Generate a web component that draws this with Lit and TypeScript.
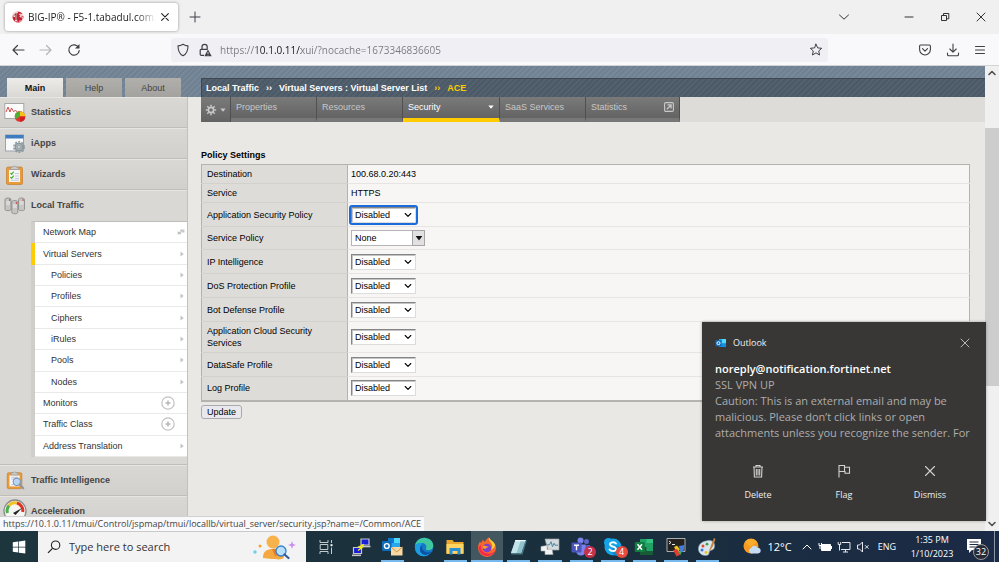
import { LitElement, html, css, svg, nothing } from "lit";
import type { TemplateResult } from "lit";
import { customElement, property } from "lit/decorators.js";
import { classMap } from "lit/directives/class-map.js";

type Icon = TemplateResult;

const draw = (size: number, box: string, body: unknown): Icon =>
  html`<svg width=${size} height=${size} viewBox=${box} aria-hidden="true" fill="none">${body}</svg>`;

const line = (size: number, box: string, d: string, width = 1): Icon =>
  draw(size, box, svg`<path d=${d} stroke="currentColor" stroke-width=${width} stroke-linecap="round" stroke-linejoin="round"/>`);

const icons = {
  back: line(14, "0 0 14 14", "M13 7H2M6.500 2.500L2 7l4.500 4.500", 1.2),
  forward: line(14, "0 0 14 14", "M1 7h11M7.500 2.500L12 7l-4.500 4.500", 1.2),
  reload: draw(14, "0 0 14 14", svg`<path d="M11.600 4.500A5.200 5.200 0 1 0 12.200 7.600" stroke="currentColor" stroke-width="1.200" stroke-linecap="round"/><path d="M12.500 1v4.600H8z" fill="currentColor"/>`),
  shield: line(14, "0 0 14 14", "M7 1.200c1.600 1 3.400 1.600 5 1.700 0 4.700-1.500 8-5 9.900C3.500 10.900 2 7.600 2 2.900c1.600-.1 3.400-.7 5-1.700z", 1.1),
  lock: draw(14, "0 0 14 14", svg`<path d="M4 6.300V4a2.600 2.600 0 0 1 5.200 0v2.300M6 12.300H3.200a1 1 0 0 1-1-1v-4a1 1 0 0 1 1-1h6.500" stroke="currentColor" stroke-width="1.200"/><path d="M10 6.500l3.700 6.700H6.300z" fill="currentColor"/><path d="M10 9v2M10 11.800v.7" stroke="#f0f0f4" stroke-width=".8"/>`),
  star: line(14, "0 0 14 14", "M7 1.200l1.700 3.700 4 .4-3 2.700.9 4L7 9.900 3.400 12l.9-4-3-2.700 4-.4z", 1),
  pocket: line(14, "0 0 14 14", "M2.600 2h8.800c.6 0 1 .4 1 1v3.600a5.400 5.400 0 0 1-10.800 0V3c0-.6.400-1 1-1zM4.500 5.700L7 8.100l2.500-2.400", 1.1),
  download: line(14, "0 0 14 14", "M7 1v8M3.800 6L7 9.200 10.200 6M1.500 10v1.500c0 .8.500 1.300 1.300 1.300h8.400c.8 0 1.300-.5 1.300-1.300V10", 1.1),
  menu: line(12, "0 0 12 12", "M1.500 2.500h9M1.500 6h9M1.500 9.500h9", 1),
  chevron: line(12, "0 0 12 12", "M1.500 4L6 8.200 10.500 4", 1),
  minimise: line(12, "0 0 12 12", "M2 6h8", 1),
  restore: draw(12, "0 0 12 12", svg`<path d="M2.500 4.500h5v5h-5zM4.500 4.200V2.500h5.300v5.300H7.800" stroke="currentColor"/>`),
  cross: line(12, "0 0 12 12", "M2 2l8 8M10 2l-8 8", 1),
  plus: line(12, "0 0 12 12", "M6 1v10M1 6h10", 1),
  f5: draw(12, "0 0 12 12", svg`<circle cx="6" cy="6" r="5.500" fill="#c8202f"/><path d="M1 3.800A5.500 5.500 0 0 1 6.500.5L5 3v6.500l1.500.8-4 .2L3.200 9 3 6H1.500z" fill="#f4dcdc"/><path d="M7 3.300h4l.4 1.400H8.200l-.2 1c2.300 0 3.200 1 2.800 2.500-.4 1.300-1.800 2.200-3.600 1.900" stroke="#fff" stroke-width=".9"/><path d="M2.200 4.500L4 2.500v6.500" stroke="#7e1018" stroke-width="1"/>`),
  gear: draw(12, "0 0 12 12", svg`<circle cx="6" cy="6" r="2.600" stroke="currentColor" stroke-width="1.600"/><path d="M6 .8v2M6 9.200v2M.8 6h2M9.200 6h2M2.300 2.300l1.400 1.400M8.300 8.300l1.400 1.400M9.700 2.300L8.300 3.700M3.700 8.300L2.300 9.700" stroke="currentColor" stroke-width="1.500"/>`),
  caret: draw(6, "0 0 6 6", svg`<path d="M.3 1.500h5.400L3 4.700z" fill="currentColor"/>`),
  popout: draw(10, "0 0 10 10", svg`<rect x=".6" y=".6" width="8.800" height="8.800" rx="1.200" stroke="currentColor" stroke-width="1.100"/><path d="M2.800 7.200L6.300 3.700M3.500 2.900h3.600v3.600" stroke="currentColor" stroke-width="1.300"/>`),
  arrow: draw(6, "0 0 6 6", svg`<path d="M1.500.5L4.700 3 1.500 5.500z" fill="#c3c3c3"/>`),
  windows: draw(8, "0 0 8 8", svg`<path d="M3 1.500h4.500v3H3z" fill="#c9c9c9"/><path d="M.5 3.500H4v3H.5z" fill="#bdbdbd" stroke="#fff" stroke-width=".5"/>`),
  add: draw(14, "0 0 14 14", svg`<circle cx="7" cy="7" r="6.200" stroke="#c2c2c2" stroke-width="1.200"/><path d="M7 4.500v5M4.500 7h5" stroke="#b8b8b8" stroke-width="1.500"/>`),
  pick: line(8, "0 0 8 8", "M1.200 2.500L4 5.300 6.800 2.500", 1.1),
  up: line(10, "0 0 10 10", "M2 6.500l3-3 3 3", 1.6),
  down: line(10, "0 0 10 10", "M2 3.500l3 3 3-3", 1.6),
  bin: draw(16, "0 0 16 16", svg`<path d="M3 4h10M6 4V2.500h4V4M4 4l.4 10h7.200L12 4" stroke="currentColor" stroke-width="1.100"/><path d="M6.300 6v6.500M8 6v6.500M9.700 6v6.500" stroke="currentColor" stroke-width="1.100"/>`),
  flag: draw(16, "0 0 16 16", svg`<path d="M3 14.500V2.500h5.500v1.800h5v6H9V8.500H3M8.500 4.300v4" stroke="currentColor" stroke-width="1.100"/>`),
  dismiss: line(16, "0 0 16 16", "M3.500 3.500l9 9M12.500 3.500l-9 9", 1.1),
  outlookSmall: draw(12, "0 0 12 12", svg`<path d="M4 2h7v8H4z" fill="#28a8ea"/><path d="M7 2h4v4H7z" fill="#50d9ff"/><path d="M4 6.500h7V10H4z" fill="#1490df"/><rect x=".5" y="3.200" width="6" height="6" fill="#0f6cbd"/><circle cx="3.500" cy="6.200" r="1.500" stroke="#fff"/>`),
};

const glass = svg`<circle cx="13" cy="14" r="4" fill="#b9d6f5" stroke="#7d97b3" stroke-width="1.200"/><path d="M16 17l4 4" stroke="#8f959b" stroke-width="2.200" stroke-linecap="round"/>`;
const clip = svg`<rect x="2.500" y="4" width="16" height="17.500" rx="1.500" fill="#eb9a35" stroke="#bd7722" stroke-width=".6"/><path d="M5 7h11v12H5z" fill="#f4f6fb"/><path d="M6.500 6.500V4.500L9 4a1.700 1.700 0 0 1 3 0l2.500.5v2z" fill="#c7c9cc" stroke="#8e9195" stroke-width=".6"/>`;

const modules = {
  statistics: draw(22, "0 0 22 22", svg`<rect x=".8" y="2.500" width="19" height="15" fill="#fbfbfb" stroke="#a7a7a7"/><path d="M2 11l2-5 2 5 1.500-4 2 3.500 2-1 2 1.500H18" stroke="#d23b3b" stroke-width=".9"/><circle cx="16" cy="15.500" r="5.300" fill="#e2382f"/><path d="M16 15.500v-5.300a5.300 5.300 0 0 1 5.300 5.300z" fill="#f5c21b"/><path d="M16 15.500l5.300 0a5.300 5.300 0 0 1-5.300 5.300z" fill="#d41f22"/><path d="M16 10.200a5.300 5.300 0 0 0-4.600 8L16 15.500z" fill="#52ae32"/>`),
  iapps: draw(22, "0 0 22 22", svg`<rect x="1.500" y="3" width="18" height="16" fill="#f8f9fb" stroke="#9aa3ad"/><path d="M1.500 3h18v3.500h-18z" fill="#3d7cc0"/><circle cx="15" cy="15" r="4" fill="#a4afb3" stroke="#828f94"/><circle cx="15" cy="15" r="5.200" stroke="#8b989d" stroke-width="1.400" stroke-dasharray="2 1.300"/><circle cx="15" cy="15" r="1.400" fill="#e9edee" stroke="#78858a" stroke-width=".6"/>`),
  wizards: draw(22, "0 0 22 22", svg`${clip}<path d="M6.500 10l1.200 1.300 2-2.600M6.500 14l1.200 1.300 2-2.600" stroke="#4fb32e" stroke-width="1.300"/><path d="M11 10.500h4M11 13h4M11 15.500h4M7 17.300h8" stroke="#b9bfd0" stroke-width=".8"/>`),
  traffic: draw(22, "0 0 22 22", svg`<g fill="#c5c6c4" stroke="#858683" stroke-width=".8"><path d="M1 5.500c0-2 6-2 6 0v10c0 1.500-6 1.500-6 0zM14.500 5.500c0-2 6-2 6 0v10c0 1.500-6 1.500-6 0zM7.800 8c0-2 6-2 6 0v10.500c0 1.600-6 1.600-6 0z"/></g><path d="M2 8h4M2 10h4M15.500 8h4M15.500 10h4M8.800 11h4M8.800 13h4" stroke="#f0f0ef" stroke-width=".9"/><path d="M5 6h1.200M18.500 6h1.200M11.800 9h1.200" stroke="#d83232" stroke-width="1.400"/>`),
  intelligence: draw(22, "0 0 22 24", svg`${clip}<path d="M7 9h7M7 11h4M7 17h4" stroke="#b9bfd0"/>${glass}`),
  acceleration: draw(24, "0 0 24 24", svg`<circle cx="12" cy="12" r="11" fill="#f5f5f4" stroke="#8b8b89" stroke-width="1.300"/><path d="M4.500 14A8 8 0 0 1 6 6.500" stroke="#49b149" stroke-width="3"/><path d="M6 6.500A8 8 0 0 1 14 4" stroke="#f2c325" stroke-width="3"/><path d="M14 4a8 8 0 0 1 5.700 9" stroke="#dd3327" stroke-width="3"/><path d="M10 14l9-5-6.500 7z" fill="#222"/>`),
};

const apps = {
  start: draw(14, "0 0 14 14", svg`<path d="M.8 2.300l5.400-.8v5.200H.8zM6.900 1.400L13.300.5v6.200H6.900zM.8 7.400h5.400v5.200l-5.400-.8zM6.900 7.400h6.400v6.200l-6.400-.9z" fill="#fff"/>`),
  search: draw(14, "0 0 14 14", svg`<circle cx="8.600" cy="5.200" r="4.200" stroke="#222" stroke-width="1.100"/><path d="M5.500 8.300L1 12.800" stroke="#222" stroke-width="1.200"/>`),
  person: html`<svg width="44" height="26" viewBox="0 0 44 26" aria-hidden="true" fill="none"><path d="M11 24c0-7 4-9 10-9s11 2 11 7-8 3-12 3z" fill="#f5a742"/><path d="M20 15c3-1 9 0 11 5l-8 2z" fill="#e47f2c"/><circle cx="21" cy="8" r="6.500" fill="#f7b24c"/><circle cx="29" cy="17" r="5" fill="#b8e1fb" stroke="#3d7fc1" stroke-width="1.300"/><path d="M32.500 20.500l4 3.500" stroke="#3159a0" stroke-width="2.200" stroke-linecap="round"/><path d="M40 7l1 3 3 1-3 1-1 3-1-3-3-1 3-1z" fill="#c78bf0"/><circle cx="8" cy="12" r="1.500" fill="#f3a32d"/><circle cx="3" cy="18" r="1.700" fill="#6ad1ea"/></svg>`,
  view: draw(16, "0 0 16 16", svg`<path d="M2 1v2.500h8V1M2 15v-2.500h8V15M2.200 5.500h7.600v5H2.200zM13.500 1v3M13.500 8.500V15" stroke="#c3cccf" stroke-width="1"/><path d="M12.500 5.200h2v2h-2z" fill="#fff"/>`),
  putty: draw(20, "0 0 20 20", svg`<path d="M10 2h8v6h-8z" fill="#1520d8" stroke="#c7c7c7" stroke-width="1.200"/><path d="M11 9.500h8.500" stroke="#c7c7c7" stroke-width="1.600"/><path d="M2.500 10.500h8v6h-8z" fill="#1520d8" stroke="#c7c7c7" stroke-width="1.200"/><path d="M1 18.300h9" stroke="#c7c7c7" stroke-width="1.600"/><path d="M13 7.500l-5 2.500 3 .5-4 3" stroke="#f4ea20" stroke-width="1.500"/>`),
  outlook: draw(22, "0 0 22 22", svg`<path d="M7 2h12v13H7z" fill="#28a8ea"/><path d="M13 2h6v5h-6z" fill="#50d9ff"/><path d="M7 2h6v5H7z" fill="#0f7bd0"/><rect x="1" y="5" width="9.500" height="10" rx="1" fill="#0f6cbd"/><circle cx="5.800" cy="10" r="2.400" stroke="#fff" stroke-width="1.400"/><path d="M10 11h11.500v8.500H10z" fill="#f8d9a3"/><path d="M10 11l5.800 5 5.700-5" stroke="#c98c42" stroke-width=".9"/>`),
  edge: draw(20, "0 0 20 20", svg`<circle cx="10" cy="10" r="9.300" fill="#1577c9"/><path d="M1 8.500C2 3.500 6 .7 10.300.7c5 0 9 3.600 9 7.800 0 3-2.300 4.700-5 4.700-1.800 0-2.800-.7-2.300-1.600C13.500 8.500 11 6 8 6 5 6 2 7 1 8.500z" fill="#3fc8a0"/><path d="M1 9c2-3 5.500-3.500 7.500-2.300C5.500 8 5 12 7.500 15c2 2.300 5.500 2.800 8.500 1.500-3 4.200-15.500 4.500-15-7.500z" fill="#1b9de2"/><path d="M8.500 8.500c-1.500 3 .5 6.500 5 7 2 .2 3.500-.5 4.300-1.200-2 3.700-7 4.700-10 2.200-2.500-2.300-2.500-6.500.7-8z" fill="#0c51a0"/>`),
  explorer: draw(20, "0 0 20 20", svg`<path d="M1.500 3h6l1.500 2h9.500v12h-17z" fill="#eaa92e"/><path d="M1.500 7h17v9.500h-17z" fill="#fcd462"/><path d="M4.500 11h11v6.500h-3V14h-5v3.500h-3z" fill="#2a8ed8"/>`),
  firefox: draw(20, "0 0 20 20", svg`<path d="M10 1.800c1-.8 1.500-1 2-1.300.3 1.500 1.500 2.300 3 3.800C18 6.500 19 8.500 19 11a9 9 0 0 1-18 0c0-3 1-5 2-6.500L4 6l2-3.500L7.500 5z" fill="#f9662c"/><path d="M12 .5c-1 3 2 4 3 7 1 3-1 4.500-2 5 3.500 0 5-2.500 5-5C17 4.500 13.500 3.500 12 .5z" fill="#ffcf35"/><path d="M1.500 10c0 5 4 9 8.500 9s7-2.500 8.300-5c-2 2-5.500 3-8.300 2.500C5 15.500 3.500 12 4 8z" fill="#f5294e"/><circle cx="10" cy="11" r="4.300" fill="#7a43c9"/><path d="M5.700 9c2-.8 4 .5 6 .5-1 1.500-3 1-3.500 2.500-1.500 0-2.800-1-2.500-3z" fill="#ff9c28"/>`),
  notepad: draw(20, "0 0 20 20", svg`<path d="M7.500 3h10.500L13.500 16H3z" fill="#8fc3cf"/><path d="M7.500 3h5.500L8.500 16H3z" fill="#c3e2e9"/><path d="M7.500 3h10.500l-.4 1.200H7z" fill="#f3fafb"/><path d="M3 16h10.500L18 3l.7 1-4.200 13.500H3.300z" fill="#4d7884"/>`),
  monitor: draw(20, "0 0 20 20", svg`<path d="M5 2h14v11H8z" fill="#d5dadd" stroke="#9ba2a6" stroke-width=".7"/><path d="M6.500 8l3-.3 1.500-3 1.500 5 1.500-3.500 1 2h3" stroke="#4a87a6"/><path d="M1 9.500l6-1v4l5-.5 1 5.500H5V14H1z" fill="#f1f2f2" stroke="#aeb1b3" stroke-width=".6"/>`),
  teams: draw(20, "0 0 20 20", svg`<circle cx="15.500" cy="4.500" r="2.500" fill="#5e66c7"/><circle cx="9.500" cy="3.500" r="3" fill="#7b83eb"/><path d="M12 8h7v5.500a4 4 0 0 1-4 4z" fill="#5059c9"/><path d="M5 7.500h9.500V14c0 6-9 6-9.500 0z" fill="#7b83eb"/><rect x=".5" y="5.500" width="10" height="10" rx="1" fill="#4b53bc"/><path d="M3 8.200h5M5.500 8.200v5" stroke="#fff" stroke-width="1.400"/>`),
  skype: draw(20, "0 0 20 20", svg`<circle cx="10" cy="10" r="8.500" fill="#14a5e8"/><circle cx="5.500" cy="5.500" r="4.500" fill="#14a5e8"/><circle cx="14" cy="14" r="5" fill="#0d8bd0"/><path d="M13 6.500c-1.500-2-6-1.500-6 .8 0 3 6 1.700 6 4.700 0 2.500-5 2.700-6.500.5" stroke="#fff" stroke-width="1.800" stroke-linecap="round"/>`),
  excel: draw(20, "0 0 20 20", svg`<path d="M6 2h13v16H6z" fill="#21a366"/><path d="M12.500 2H19v4h-6.500z" fill="#33c481"/><path d="M6 10h6.500v8H6zM12.500 14H19v4h-6.500z" fill="#185c37"/><rect x=".8" y="5" width="10" height="10" rx="1" fill="#107c41"/><path d="M3.500 7.300l4.500 5.400M8 7.300l-4.500 5.400" stroke="#fff" stroke-width="1.500"/>`),
  terminal: draw(20, "0 0 20 20", svg`<path d="M1 1.500h18v13H1z" fill="#24211f" stroke="#cfcfcf" stroke-width=".8"/><path d="M3 4l2 1.500L3 7M6 7.500h3" stroke="#fff" stroke-width=".9"/><path d="M8 10l3-1.500 3 4-3 3z" fill="#f0c419"/><path d="M7 13l4-1 3.500 5.500-4 2z" fill="#e03c31"/><path d="M13 9l5.500-1-1 6.500-3.500 1.500z" fill="#3f7ee0"/><path d="M12 15l4-1-1.500 4z" fill="#46a84a"/>`),
  paint: draw(20, "0 0 20 20", svg`<path d="M9 4c6-1.500 9 1 8.500 5.500-.4 4-3 3-4.500 4.500s0 4.500-4.500 4.500C4 18.500 1 15 1.500 11 2 7 5 4.800 9 4z" fill="#d9e6ef" stroke="#8ba3b4" stroke-width=".6"/><circle cx="6" cy="9" r="1.500" fill="#e5462f"/><circle cx="10" cy="7.200" r="1.400" fill="#3f9f46"/><circle cx="5" cy="13" r="1.500" fill="#3f74d8"/><circle cx="9" cy="15.500" r="1.400" fill="#eac024"/><path d="M17 1l1.500 1-2.500 7-5 8 3.500-10z" fill="#c98439"/>`),
  weather: draw(18, "0 0 18 18", svg`<circle cx="8" cy="8" r="7.500" fill="#f79a22"/><path d="M2 4a7.500 7.500 0 0 1 12 0L7 9z" fill="#fbb532" opacity=".7"/><path d="M8.500 15.500a2.800 2.800 0 0 1-.3-5.500 3.500 3.500 0 0 1 6.300-.3 2.900 2.900 0 0 1 .5 5.800z" fill="#c4dcf8"/>`),
  chevronUp: line(12, "0 0 12 12", "M2 8l4-4 4 4", 1),
  battery: draw(14, "0 0 14 14", svg`<path d="M3.500 4.500h9v6h-9z" fill="#fff" stroke="#fff"/><path d="M13.500 6v3M1 3v2.500h2.500V3M2 5.500V9" stroke="#fff"/>`),
  network: draw(14, "0 0 14 14", svg`<path d="M5 2.500h8v7H4M6 12h5M8.500 9.500V12M1.200 2v2.500h2.500V2M2.500 4.500v6" stroke="#e5e8ee"/>`),
  volume: draw(14, "0 0 14 14", svg`<path d="M1.500 5h2l3-3v10l-3-3h-2zM9 5.200l3.500 3.500M12.500 5.200L9 8.700" stroke="#e5e8ee"/>`),
  notes: draw(20, "0 0 20 20", svg`<path d="M2 2h14v11H7l-3 3v-3H2z" fill="#fff"/><path d="M4.500 5h9M4.500 7.500h9M4.500 10h6" stroke="#1c2a44"/>`),
};

const control = css`
  * { box-sizing: border-box; }
  button { font: inherit; color: inherit; background: none; border: 0; padding: 0; display: flex; align-items: center; justify-content: center; }
  a { color: inherit; text-decoration: none; }
  svg { display: block; flex: none; }
  ul { list-style: none; margin: 0; padding: 0; }
`;

@customElement("browser-chrome")
class BrowserChrome extends LitElement {
  static styles = [control, css`
    :host { display: block; flex: none; background: #f0f0f0; color: #3f3f46; font: 10px/16px "Open Sans", "Noto Sans", sans-serif; }
    .strip { display: flex; height: 34px; align-items: center; padding: 0 12px 0 5px; }
    .tab { display: flex; align-items: center; width: 173px; height: 28px; padding: 0 8px 0 7px; gap: 4px; background: #fff; border-radius: 3px; box-shadow: 0 0 3px #00000066; color: #222; }
    .title { flex: 1; overflow: hidden; white-space: nowrap; mask-image: linear-gradient(90deg, #000 85%, transparent); }
    .new { margin-left: 10px; width: 14px; }
    .window { margin-left: auto; display: flex; gap: 24px; color: #333; }
    .window .tabs { margin-right: 29px; }
    .bar { display: flex; align-items: center; height: 32px; padding: 0 13px 0 11px; background: #f9f9fb; border-bottom: 1px solid #d4d4d8; }
    .nav { display: flex; gap: 14px; width: 160px; }
    .off { color: #b4b4b8; }
    .address { flex: 1; max-width: 657px; display: flex; align-items: center; height: 24px; padding: 0 5px; gap: 8px; background: #f0f0f4; border-radius: 3px; }
    input { flex: 1; min-width: 0; border: 0; outline: 0; padding: 0; font: inherit; height: 18px; color: transparent; background: linear-gradient(90deg, #77777f 37px, #15141a 37px 81px, #77777f 81px); background-clip: text; }
    .tools { display: flex; align-items: center; gap: 14px; margin-left: auto; }
  `];

  render() {
    return html`
      <div class="strip">
        <div class="tab">${icons.f5}<span class="title">BIG-IP® - F5-1.tabadul.com (10.1</span>
          <button aria-label="Close tab">${line(10, "0 0 12 12", "M2 2l8 8M10 2l-8 8", 1.3)}</button></div>
        <button class="new" aria-label="New tab">${icons.plus}</button>
        <div class="window">
          <button class="tabs" aria-label="List tabs">${icons.chevron}</button>
          <button aria-label="Minimise">${icons.minimise}</button>
          <button aria-label="Restore">${icons.restore}</button>
          <button aria-label="Close window">${icons.cross}</button>
        </div>
      </div>
      <div class="bar">
        <div class="nav">
          <button aria-label="Back">${icons.back}</button>
          <button class="off" aria-label="Forward">${icons.forward}</button>
          <button aria-label="Reload">${icons.reload}</button>
        </div>
        <div class="address">${icons.shield}${icons.lock}
          <input aria-label="Address" .value=${"https://10.1.0.11/xui/?nocache=1673346836605"}>
          <button aria-label="Bookmark">${icons.star}</button></div>
        <div class="tools">
          <button aria-label="Pocket">${icons.pocket}</button>
          <button aria-label="Downloads">${icons.download}</button>
          <button aria-label="Menu">${icons.menu}</button>
        </div>
      </div>`;
  }
}

interface Entry { text: string; mark: Icon; deep?: boolean; on?: boolean }

const entries: Entry[] = [
  { text: "Network Map", mark: icons.windows },
  { text: "Virtual Servers", mark: icons.arrow, on: true },
  ...["Policies", "Profiles", "Ciphers", "iRules", "Pools", "Nodes"].map((text) => ({ text, mark: icons.arrow, deep: true })),
  { text: "Monitors", mark: icons.add },
  { text: "Traffic Class", mark: icons.add },
  { text: "Address Translation", mark: icons.arrow },
];

@customElement("side-menu")
class SideMenu extends LitElement {
  static styles = [control, css`
    :host { display: block; width: 188px; flex: none; background: #d9d8d4; color: #444; font: 9px/12px "Liberation Sans", Arial, sans-serif; border-right: 1px solid #c2c1bd; }
    .module { display: flex; align-items: center; gap: 5px; height: 31px; padding-left: 4px; font-weight: bold; background: linear-gradient(#d9d8d5, #d1d0cc); border-bottom: 1px solid #bfbeba; box-shadow: inset 0 1px #e6e5e2; }
    .icon { width: 22px; display: flex; justify-content: center; }
    .open { background: none; border-color: transparent; }
    .module.after { height: 32px; border-top: 1px solid #bfbeba; }
    .list { display: grid; grid-auto-rows: 1fr; height: 236px; margin: 0 0 7px 31px; border-left: 4px solid #cfcecb; border-top: 1px solid #bfbeba; background: #fff; color: #333; }
    .entry { display: flex; align-items: center; justify-content: space-between; height: 100%; padding: 0 2px 0 8px; border-bottom: 1px solid #e9e9e8; }
    .deep .entry { padding-left: 16px; }
    .wide .entry { padding-right: 12px; }
    .on { box-shadow: -4px 0 #fc0; }
  `];

  private module(icon: Icon, text: string, extra = "") {
    return html`<a href="#" class="module ${extra}"><span class="icon">${icon}</span>${text}</a>`;
  }

  render() {
    return html`<nav aria-label="Modules">
      ${this.module(modules.statistics, "Statistics")}
      ${this.module(modules.iapps, "iApps")}
      ${this.module(modules.wizards, "Wizards")}
      ${this.module(modules.traffic, "Local Traffic", "open")}
      <ul class="list">${entries.map((e) => html`
        <li class=${classMap({ deep: !!e.deep, on: !!e.on, wide: e.mark === icons.add })}><a href="#" class="entry">${e.text}${e.mark}</a></li>`)}
      </ul>
      ${this.module(modules.intelligence, "Traffic Intelligence", "after")}
      ${this.module(modules.acceleration, "Acceleration")}
    </nav>`;
  }
}

interface Setting { label: string; value: string; kind?: "text" | "select" | "combo"; active?: boolean }

const settings: Setting[] = [
  { label: "Destination", value: "100.68.0.20:443", kind: "text" },
  { label: "Service", value: "HTTPS", kind: "text" },
  { label: "Application Security Policy", value: "Disabled", active: true },
  { label: "Service Policy", value: "None", kind: "combo" },
  { label: "IP Intelligence", value: "Disabled" },
  { label: "DoS Protection Profile", value: "Disabled" },
  { label: "Bot Defense Profile", value: "Disabled" },
  { label: "Application Cloud Security Services", value: "Disabled" },
  { label: "DataSafe Profile", value: "Disabled" },
  { label: "Log Profile", value: "Disabled" },
];

@customElement("policy-form")
class PolicyForm extends LitElement {
  static styles = [control, css`
    :host { display: block; padding: 26px 15px 0 0; color: #000; font: 9px/12px "Liberation Sans", Arial, sans-serif; }
    h2 { font-size: 9px; line-height: 14px; margin: 0 0 2px; }
    table { width: 100%; border-collapse: collapse; border: 1px solid #b4b3b0; border-bottom: 2px solid #b4b3b0; }
    th, td { height: 24px; padding: 0 5px; text-align: left; font-weight: normal; border-bottom: 1px solid #d2d1ce; }
    td { background: #f7f6f5; border-bottom-color: #e6e5e3; padding: 0 3px; }
    th { width: 146px; background: #dddcd9; border-right: 1px solid #b4b3b0; }
    th label { display: block; }
    .short th, .short td { height: 19px; }
    .combined th, .combined td { height: 23px; }
    .tall th { height: 31px; }
    .field { position: relative; display: flex; width: 65px; height: 16px; }
    select { appearance: none; width: 100%; margin: 0; padding: 0 3px; font: inherit; color: #000; background: #fff; border: 1px solid; border-color: #858585 #dcdcdc #dcdcdc #858585; border-radius: 0; outline: 0; box-shadow: inset 1px 1px #c4c4c4; }
    .active select { outline: 2px solid #1a6cdc; outline-offset: 0; border-radius: 1px; }
    .mark { position: absolute; right: 4px; top: 0; bottom: 0; display: flex; align-items: center; pointer-events: none; }
    .combo { width: 74px; }
    .combo select { border-color: #b5b5b5; box-shadow: none; }
    .combo .mark { right: 0; width: 13px; justify-content: center; background: #e1e1e1; border: 1px solid #a5a5a5; }
    .update { margin-top: 3px; height: 14px; width: 41px; border: 1px solid #a9a9b2; border-radius: 3px; background: #e9e9ed; }
  `];

  private field(s: Setting, i: number) {
    if (s.kind === "text") return s.value;
    const combo = s.kind === "combo";
    return html`<span class=${classMap({ field: true, combo, active: !!s.active })}>
      <select id="f${i}"><option>${s.value}</option></select>
      <span class="mark">${combo ? draw(8, "0 0 6 6", svg`<path d="M.5 1.500h5L3 4.800z" fill="#111"/>`) : icons.pick}</span></span>`;
  }

  render() {
    return html`<h2>Policy Settings</h2>
      <table><tbody>${settings.map((s, i) => html`
        <tr class=${classMap({ short: s.kind === "text", combined: s.kind === "combo", tall: s.label.length > 30 })}>
          <th scope="row">${s.kind === "text" ? s.label : html`<label for="f${i}">${s.label}</label>`}</th>
          <td>${this.field(s, i)}</td></tr>`)}
      </tbody></table>
      <button class="update">Update</button>`;
  }
}

@customElement("admin-page")
class AdminPage extends LitElement {
  static styles = [control, css`
    :host { display: flex; flex-direction: column; flex: 1; min-width: 0; background: #e9e8e4; font: 9px/12px "Liberation Sans", Arial, sans-serif; }
    .top { display: flex; align-items: flex-end; flex: none; height: 31px; background: repeating-linear-gradient(135deg, #708191 0 2px, #76889a 2px 4px); }
    .tabs { display: flex; gap: 3px; width: 201px; padding-left: 7px; }
    .tab { width: 56px; height: 19px; display: flex; align-items: center; justify-content: center; color: #444; background: linear-gradient(#b0afab, #a3a29e); }
    .tab.main { color: #111; font-weight: bold; background: linear-gradient(#ecebe9, #d9d8d4); }
    .crumbs { flex: 1; display: flex; align-items: center; gap: 7px; height: 19px; padding-left: 4px; color: #fff; font-weight: bold; background: repeating-linear-gradient(135deg, #4c5a67 0 2px, #53616f 2px 4px); border-top: 1px solid #3d4853; border-left: 1px solid #3d4853; }
    .here { color: #fc0; }
    .body { display: flex; flex: 1; min-height: 0; }
    main { flex: 1; min-width: 0; margin-left: 13px; }
    .row { display: flex; height: 25px; background: #dddcd8; color: #c8c8c8; }
    .item { display: flex; width: 86px; padding: 0 5px 1px; align-items: center; justify-content: space-between; background: linear-gradient(#7a7a7a, #636363); border-right: 1px solid #505050; border-bottom: 4px solid #777; }
    .item.gear { width: 30px; padding: 1px 4px 0; border-bottom: 0; }
    .item.last { width: 94px; }
    .item.now { width: 97px; color: #fff; border-bottom-color: #fc0; }
  `];

  render() {
    return html`
      <header class="top">
        <nav class="tabs" aria-label="Sections"><a href="#" class="tab main">Main</a><a href="#" class="tab">Help</a><a href="#" class="tab">About</a></nav>
        <div class="crumbs"><span>Local Traffic</span><span>››</span><span>Virtual Servers : Virtual Server List</span><span class="here">››</span><span class="here">ACE</span></div>
      </header>
      <div class="body">
        <side-menu></side-menu>
        <main>
          <nav class="row" aria-label="Virtual server">
            <button class="item gear" aria-label="Preferences">${icons.gear}${icons.caret}</button>
            <a href="#" class="item">Properties</a>
            <a href="#" class="item">Resources</a>
            <a href="#" class="item now">Security${icons.caret}</a>
            <a href="#" class="item">SaaS Services</a>
            <a href="#" class="item last">Statistics${icons.popout}</a>
          </nav>
          <policy-form></policy-form>
        </main>
      </div>`;
  }
}

@customElement("mail-toast")
class MailToast extends LitElement {
  static styles = [control, css`
    :host { display: flex; flex-direction: column; width: 284px; height: 199px; padding: 14px 13px 0; background: #383736; color: #adadad; font: 11px/16px "Open Sans", "Noto Sans", sans-serif; box-shadow: 0 0 3px #0000004d; }
    .head { display: flex; align-items: center; gap: 6px; height: 14px; margin-bottom: 11px; color: #eee; font-size: 9px; }
    .head button { margin-left: auto; margin-right: 2px; color: #b8b8b8; }
    strong { color: #fff; font-weight: 600; }
    .text { overflow: hidden; white-space: nowrap; }
    .acts { display: grid; grid-template-columns: repeat(3, 1fr); margin-top: 22px; color: #eee; font-size: 9px; line-height: 12px; }
    .acts button { flex-direction: column; gap: 10px; }
    .acts svg { color: #d2d2d2; }
  `];

  render() {
    return html`
      <div class="head">${icons.outlookSmall}<span>Outlook</span><button aria-label="Close">${icons.cross}</button></div>
      <strong class="text">noreply@notification.fortinet.net</strong>
      <span class="text">SSL VPN UP</span>
      <span class="text">Caution: This is an external email and may be</span>
      <span class="text">malicious. Please don’t click links or open</span>
      <span class="text">attachments unless you recognize the sender. For a</span>
      <div class="acts">
        <button>${icons.bin}Delete</button><button>${icons.flag}Flag</button><button>${icons.dismiss}Dismiss</button>
      </div>`;
  }
}

interface App { name: string; icon: Icon; open?: boolean; count?: string; front?: boolean }

const running: App[] = [
  { name: "PuTTY", icon: apps.putty },
  { name: "Outlook", icon: apps.outlook, open: true },
  { name: "Edge", icon: apps.edge },
  { name: "File Explorer", icon: apps.explorer, open: true },
  { name: "Firefox", icon: apps.firefox, open: true, front: true },
  { name: "Notepad", icon: apps.notepad, open: true },
  { name: "Monitor", icon: apps.monitor, open: true },
  { name: "Teams", icon: apps.teams, open: true, count: "2" },
  { name: "Skype", icon: apps.skype, open: true, count: "4" },
  { name: "Excel", icon: apps.excel, open: true },
  { name: "Terminal", icon: apps.terminal, open: true },
  { name: "Paint", icon: apps.paint, open: true },
];

@customElement("task-bar")
class TaskBar extends LitElement {
  static styles = [control, css`
    :host { display: flex; flex: none; height: 31px; background: linear-gradient(90deg, #1d353d, #1a2f3d 60%, #1b2a46); color: #fff; font: 10px/14px "Open Sans", "Noto Sans", sans-serif; }
    .start { width: 38px; }
    .search { display: flex; align-items: center; gap: 8px; width: 268px; padding: 0 10px 0 9px; background: #f3f3f3; border-top: 1px solid #c9c9c9; }
    input { flex: 1; min-width: 0; border: 0; outline: 0; padding: 0; background: none; font: inherit; font-size: 11px; }
    input::placeholder { color: #333; opacity: 1; }
    .view { width: 39px; }
    .apps { display: grid; grid-template-columns: repeat(12, 1fr); width: 378px; }
    .app { position: relative; }
    .front { background: #435760; }
    .open::after { content: ""; position: absolute; left: 4px; right: 4px; bottom: 0; height: 2px; background: #76b9ed; }
    .front::after { left: 0; right: 0; }
    .count { position: absolute; right: 1px; bottom: 4px; width: 12px; height: 12px; border-radius: 6px; background: #c4314b; font-size: 9px; line-height: 12px; text-align: center; }
    .red { background: #e84b3c; }
    .tray { display: flex; align-items: center; margin-left: auto; padding-right: 4px; gap: 5px; white-space: nowrap; }
    .weather { gap: 6px; margin-right: 4px; font-size: 11px; }
    .lang { margin: 0 5px 0 3px; font-size: 9px; }
    .clock { flex-direction: column; width: 52px; font-size: 9px; }
    .notes { position: relative; margin-left: 2px; height: 31px; width: 24px; justify-content: flex-start; }
    .notes .count { right: 0; bottom: 2px; width: 16px; height: 16px; border-radius: 8px; line-height: 14px; border: 1px solid #999; background: #262b35; }
    .edge { border-left: 1px solid #8b95a5; height: 31px; }
  `];

  render() {
    return html`
      <button class="start" aria-label="Start">${apps.start}</button>
      <div class="search">${apps.search}<input aria-label="Search" placeholder="Type here to search">${apps.person}</div>
      <button class="view" aria-label="Task view">${apps.view}</button>
      <div class="apps">${running.map((a) => html`
        <button class=${classMap({ app: true, open: !!a.open, front: !!a.front })} aria-label=${a.name}>${a.icon}${a.count ? html`<span class=${classMap({ count: true, red: a.name === "Skype" })}>${a.count}</span>` : nothing}</button>`)}
      </div>
      <div class="tray">
        <button class="weather">${apps.weather}12°C</button>
        <button aria-label="Hidden icons">${apps.chevronUp}</button>
        <button aria-label="Battery">${apps.battery}</button>
        <button aria-label="Network">${apps.network}</button>
        <button aria-label="Volume">${apps.volume}</button>
        <button class="lang">ENG</button>
        <button class="clock"><span>1:35 PM</span><span>1/10/2023</span></button>
        <button class="notes" aria-label="Notifications">${apps.notes}<span class="count">32</span></button>
        <span class="edge"></span>
      </div>`;
  }
}

@customElement("app-root")
class AppRoot extends LitElement {
  @property() status = "https://10.1.0.11/tmui/Control/jspmap/tmui/locallb/virtual_server/security.jsp?name=/Common/ACE";

  static styles = [control, css`
    :host { display: flex; flex-direction: column; height: 100vh; overflow: hidden; }
    .view { position: relative; display: flex; flex: 1; min-height: 0; overflow: hidden; }
    .scroll { display: flex; flex-direction: column; align-items: center; width: 14px; padding: 2px 0; background: #f0f0f0; color: #505050; }
    .thumb { align-self: stretch; height: 56%; margin: 50px 0 auto; background: #cdcdcd; }
    .status { position: absolute; left: 0; bottom: 0; height: 15px; padding: 0 3px; background: #f9f9fb; border-top: 1px solid #d0d0d0; color: #444; font: 9px/14px "Open Sans", "Noto Sans", sans-serif; white-space: nowrap; }
    mail-toast { position: absolute; right: 13px; bottom: 10px; }
  `];

  render() {
    return html`
      <browser-chrome></browser-chrome>
      <div class="view">
        <admin-page></admin-page>
        <div class="scroll">${icons.up}<span class="thumb"></span>${icons.down}</div>
        <div class="status">${this.status}</div>
        <mail-toast></mail-toast>
      </div>
      <task-bar></task-bar>`;
  }
}
